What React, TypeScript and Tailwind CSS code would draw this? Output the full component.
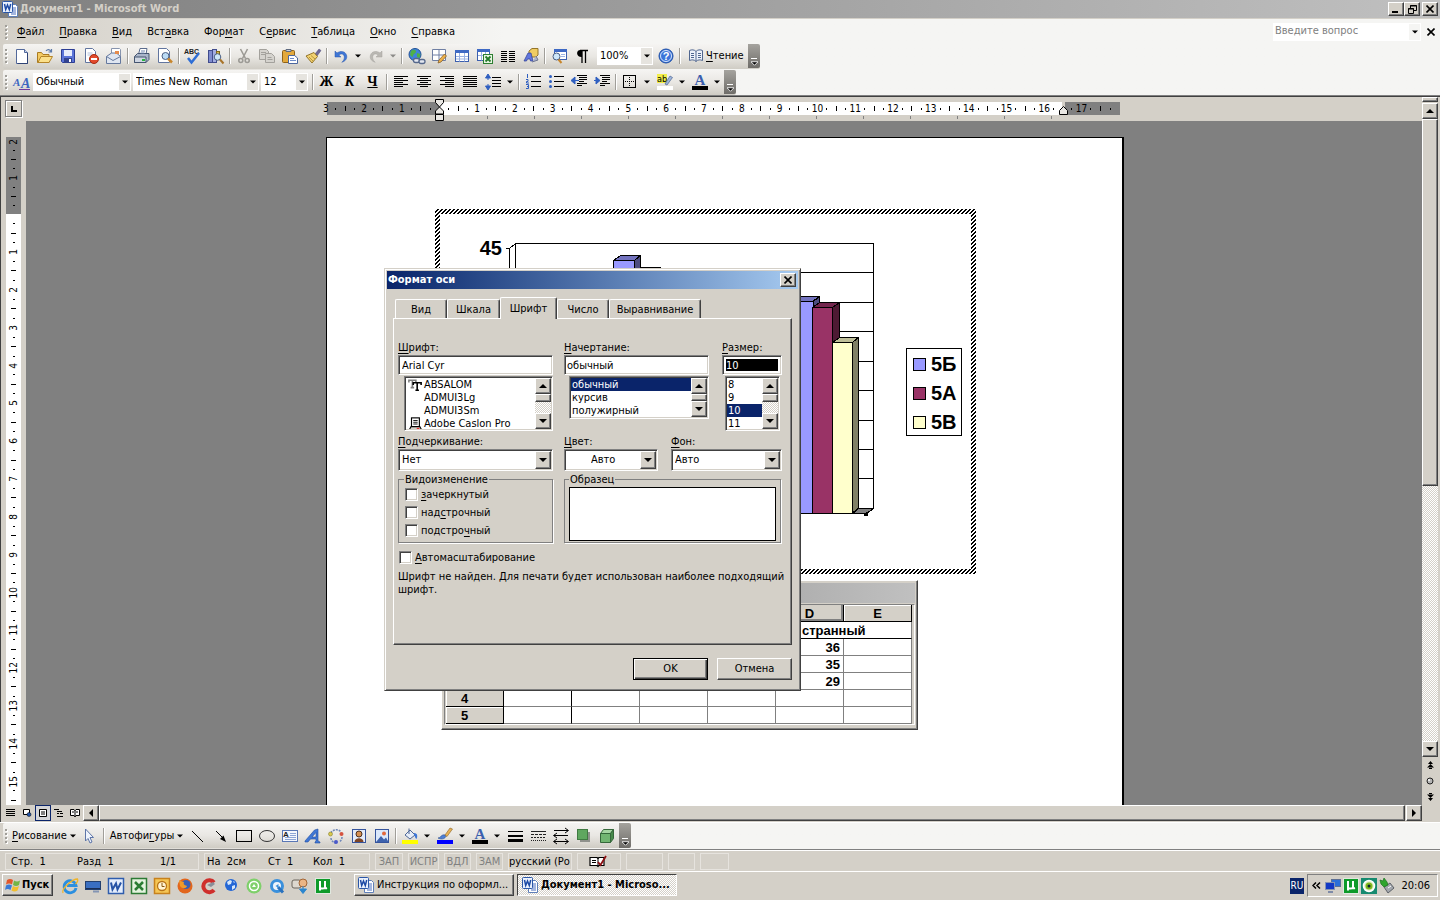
import type { ReactNode } from 'react'

const raised =
  'bg-[#d4d0c8] border border-t-white border-l-white border-b-[#404040] border-r-[#404040] shadow-[inset_-1px_-1px_0_#808080]'
const sunken =
  'bg-white border border-t-[#808080] border-l-[#808080] border-b-white border-r-white shadow-[inset_1px_1px_0_#404040,inset_-1px_-1px_0_#d4d0c8]'
const dither = 'bg-[repeating-conic-gradient(#ffffff_0_25%,#d4d0c8_0_50%)] bg-[length:2px_2px]'
const barBg = 'bg-linear-to-b from-[#f5f4f2] via-[#e9e7e3] to-[#cfccc4]'

/* ---------- icons ---------- */

const icons: Record<string, ReactNode> = {
  word: (
    <>
      <path d="M6.500 3.500h7l2 2v10h-9z" fill="#fff" stroke="#5f7fb8" />
      <path d="M9 7h5M9 9h5M9 11h5M9 13h5" stroke="#4b6fc0" />
      <rect x=".5" y=".5" width="10" height="11" rx="1" fill="#eaf1fd" stroke="#2b57a8" />
      <path d="M2.500 3l1.200 5.500L5.500 4l1.800 4.500L8.700 3" fill="none" stroke="#1d4aa5" strokeWidth="1.500" />
    </>
  ),
  newDoc: (
    <>
      <path d="M2.500 1.500h8l3 3v11h-11z" fill="#fff" stroke="#53699b" />
      <path d="M10.500 1.500v3h3" fill="#cbd9f2" stroke="#53699b" />
      <path d="M13.500 5v10.500h-10" stroke="#2f4375" fill="none" />
    </>
  ),
  open: (
    <>
      <path d="M.5 14.500v-10h4l1.500 2h6v8z" fill="#f4cb63" stroke="#a97b22" />
      <path d="M1 14.500l3-6h11.500l-3.500 6z" fill="#fbe08a" stroke="#b58528" />
      <path d="M9 3c1.500-2 4-2 5 .5M14.500 1v3h-3" fill="none" stroke="#5b79a8" strokeWidth="1.200" />
    </>
  ),
  save: (
    <>
      <path d="M1.500 1.500h13v13h-12l-1-1z" fill="#5b74d8" stroke="#2c3d94" />
      <rect x="4" y="2" width="8" height="6" fill="#e6ebfb" />
      <rect x="4" y="10" width="8" height="5" fill="#33438f" />
      <rect x="9" y="11" width="2" height="3" fill="#fff" />
    </>
  ),
  permission: (
    <>
      <path d="M2.500.5h7l3 3v11h-10z" fill="#fff" stroke="#61759f" />
      <path d="M4.500 5h5M4.500 7h5" stroke="#b3bfd8" />
      <circle cx="11" cy="11" r="4.500" fill="#e2492b" stroke="#a52a12" />
      <rect x="8" y="10" width="6" height="2" fill="#fff" />
    </>
  ),
  mail: (
    <>
      <path d="M5.500.5h8l1 1v9h-9z" fill="#fff" stroke="#8794ad" />
      <path d="M.5 8.500l5-3.500h5l4 3.500v7H.5z" fill="#dfe6f1" stroke="#64789e" />
      <path d="M.5 8.500l6.500 4 7.500-4" fill="none" stroke="#64789e" />
      <rect x="9" y="3" width="4" height="3" fill="#e58b4d" />
    </>
  ),
  print: (
    <>
      <path d="M4.500 6.500l1.500-6h7l-1 6z" fill="#fff" stroke="#5b6c8d" />
      <path d="M.5 8.500l3-3h11.500v6l-3 3H.5z" fill="#aab6ca" stroke="#44546f" />
      <path d="M.5 9h11.500v5.500H.5z" fill="#cfd6e2" stroke="#44546f" />
      <rect x="8" y="11" width="3" height="2" fill="#29b53d" />
      <path d="M7 3h4M6.500 5h4" stroke="#7187b0" />
    </>
  ),
  preview: (
    <>
      <path d="M1.500.5h8l3 3v11h-11z" fill="#fff" stroke="#61759f" />
      <circle cx="8.500" cy="8" r="3.500" fill="#bcdcf5" stroke="#4b5f83" />
      <path d="M11 10.500l4 4" stroke="#c8862c" strokeWidth="2.500" />
    </>
  ),
  spelling: (
    <>
      <text x="-1" y="6" fontSize="7" fontWeight="bold" fontFamily="Liberation Sans, sans-serif" fill="#222">ABC</text>
      <path d="M3 10l3.500 4.500L14 5" fill="none" stroke="#2f6fd6" strokeWidth="2.500" />
    </>
  ),
  research: (
    <>
      <rect x=".5" y="2.500" width="4" height="12" fill="#7f8ccf" stroke="#414c8d" />
      <rect x="4.500" y="1.500" width="4" height="13" fill="#a4aee2" stroke="#414c8d" />
      <rect x="8.500" y="3.500" width="3" height="4" fill="#d6b94f" stroke="#80681b" />
      <circle cx="9.500" cy="9" r="3.300" fill="#cfe8fa" stroke="#4b5f83" />
      <path d="M12 11.500l3.500 4" stroke="#a8742a" strokeWidth="2" />
    </>
  ),
  cut: (
    <g fill="none" stroke="#9c9a95" strokeWidth="1.600">
      <path d="M4.500 1l5 9.500M11.500 1l-5 9.500" />
      <circle cx="4.800" cy="12.500" r="2" />
      <circle cx="11.200" cy="12.500" r="2" />
    </g>
  ),
  copy: (
    <g fill="#d5d3ce" stroke="#a3a19c">
      <path d="M.5 1.500h7l2 2v8h-9z" />
      <path d="M6.500 5.500h6l3 3v6h-9z" />
      <path d="M2 4.500h5M2 6.500h4M8.500 9.500h4M8.500 11.500h5" />
    </g>
  ),
  paste: (
    <>
      <rect x=".5" y="2.500" width="12" height="12" rx="1" fill="#e3a93c" stroke="#8f6319" />
      <path d="M4 3.500v-2h5v2z" fill="#c9d0db" stroke="#5e6a80" />
      <path d="M6.500 7.500h6l3 2.500v5.500h-9z" fill="#fff" stroke="#4b669e" />
      <path d="M8 10.500h4M8 12.500h6" stroke="#6d8bc8" />
    </>
  ),
  painter: (
    <>
      <path d="M10 6l4-5 2 1.500L12 8z" fill="#6f6a9a" stroke="#4a4673" strokeWidth=".5" />
      <path d="M1 8l8-3.500 3.500 4L7 15z" fill="#f2d273" stroke="#94752a" />
      <path d="M4 9l4 4M6 7.500l4 3.500" stroke="#b99839" />
    </>
  ),
  undo: <path d="M2 3v6h6L5.800 7c3-2.500 6-.5 5.500 3-.2 1.700-1 3-2.500 4.300C13 13 14.500 10 13.500 7 12 3 7.500 2.500 4 5z" fill="#3f77d6" stroke="#2a57ab" strokeWidth=".5" />,
  redo: <path d="M14 3v6H8l2.200-2c-3-2.500-6-.5-5.500 3 .2 1.700 1 3 2.500 4.300C3 13 1.500 10 2.500 7 4 3 8.500 2.500 12 5z" fill="#bab8b3" stroke="#a5a39e" strokeWidth=".5" />,
  link: (
    <>
      <circle cx="7" cy="6.500" r="6" fill="#3f83dc" stroke="#1f4f96" />
      <path d="M3 3c2-2 5-1.500 5 .5S5 6 5 8s-2 0-3-1zM9 5l3.500 1-1 4-2.500-1z" fill="#4fb04a" />
      <g fill="#e4e8f0" stroke="#56688c" strokeWidth="1.300">
        <rect x="5.500" y="10.500" width="6" height="4" rx="2" />
        <rect x="11" y="11.500" width="6" height="4" rx="2" />
      </g>
    </>
  ),
  borders: (
    <>
      <path d="M1.500 1.500h13v11h-13zM8 1.500v11M1.500 7h13" fill="#fff" stroke="#6f7fa3" />
      <path d="M7 15l1-3 5.500-6 2 2L10 14z" fill="#eeb14a" stroke="#7c5620" strokeWidth=".7" />
    </>
  ),
  table: (
    <>
      <rect x="1.500" y="2.500" width="13" height="11" fill="#fff" stroke="#3b5fae" />
      <rect x="1" y="2" width="14" height="3" fill="#3e69c4" />
      <path d="M2 8.500h12M2 11h12M5.500 5v8.500M10.500 5v8.500" stroke="#9bb3e4" />
    </>
  ),
  excelTable: (
    <>
      <rect x=".5" y="1.500" width="12" height="11" fill="#fff" stroke="#3b5fae" />
      <rect x="0" y="1" width="13" height="3" fill="#3e69c4" />
      <path d="M1 7.500h11M4.500 4v8.500M8.500 4v8.500" stroke="#9bb3e4" />
      <rect x="6.500" y="6.500" width="9" height="9" fill="#e9f6e4" stroke="#2d7f31" />
      <path d="M8.500 8.500l5 5M13.500 8.500l-5 5" stroke="#237a2a" strokeWidth="1.800" />
    </>
  ),
  columns: <path d="M1 3.500h6M9 3.500h6M1 5.500h6M9 5.500h6M1 7.500h6M9 7.500h6M1 9.500h6M9 9.500h6M1 11.500h6M9 11.500h6M1 13.500h6M9 13.500h6" stroke="#000" />,
  drawing: (
    <>
      <path d="M6 3l3-2.500h6V7l-2 2H6z" fill="#f0cc62" stroke="#94752a" />
      <path d="M1 13L5 5h3l2 8H7.500l-.5-2H4.500l-1 2z" fill="#6276dc" stroke="#2c3d94" strokeWidth=".7" />
      <path d="M9 14l6-2-2-4" fill="#aeb4c9" stroke="#6f7691" />
    </>
  ),
  docMap: (
    <>
      <rect x="3.500" y="1.500" width="12" height="10" fill="#fff" stroke="#3b5fae" />
      <rect x="3" y="1" width="13" height="3" fill="#3e69c4" />
      <path d="M10 6.500h4M10 8.500h4" stroke="#9bb3e4" />
      <circle cx="5.500" cy="8.500" r="3.500" fill="#cfe8fa" stroke="#4b5f83" />
      <path d="M7.500 11.500l3 3.500" stroke="#c8862c" strokeWidth="2" />
    </>
  ),
  pilcrow: (
    <>
      <path d="M8 2v7C2 9.500 1.500 2 6.500 2z" />
      <path d="M6 2.500h8M8 3v12M11.500 3v12" fill="none" stroke="#000" strokeWidth="1.300" />
    </>
  ),
  help: (
    <>
      <circle cx="8" cy="8" r="7" fill="#3b74d9" stroke="#1f4fa6" />
      <circle cx="8" cy="8" r="5.500" fill="none" stroke="#d7e5fb" />
      <text x="8" y="12" textAnchor="middle" fontSize="11" fontWeight="bold" fontFamily="Liberation Sans, sans-serif" fill="#fff">?</text>
    </>
  ),
  book: (
    <>
      <path d="M1.500 2.500c2-1 5-1 6.500 1 1.500-2 4.500-2 6.500-1v10c-2-1-5-1-6.500 1-1.500-2-4.500-2-6.500-1z" fill="#eef2fa" stroke="#50668f" />
      <path d="M8 3.500v10M3 5.500h3M3 7.500h3M3 9.500h3M10 5.500h3M10 7.500h3M10 9.500h3" stroke="#50668f" />
    </>
  ),
  styles: (
    <>
      <text x="-1" y="12" fontSize="11" fontStyle="italic" fontWeight="bold" fontFamily="Liberation Serif, serif" fill="#3c66c0">A</text>
      <text x="7" y="14" fontSize="14" fontStyle="italic" fontWeight="bold" fontFamily="Liberation Serif, serif" fill="#3c66c0">A</text>
      <path d="M5 15.500h11" stroke="#713ba0" />
    </>
  ),
  alignLeft: <path d="M1 2.500h14M1 4.500h9M1 6.500h14M1 8.500h9M1 10.500h14M1 12.500h9" stroke="#000" />,
  alignCenter: <path d="M1 2.500h14M4 4.500h8M1 6.500h14M4 8.500h8M1 10.500h14M4 12.500h8" stroke="#000" />,
  alignRight: <path d="M1 2.500h14M6 4.500h9M1 6.500h14M6 8.500h9M1 10.500h14M6 12.500h9" stroke="#000" />,
  justify: <path d="M1 2.500h14M1 4.500h14M1 6.500h14M1 8.500h14M1 10.500h14M1 12.500h14" stroke="#000" />,
  spacing: (
    <>
      <path d="M7 3.500h9M7 6.500h9M7 9.500h9M7 12.500h9" stroke="#000" />
      <path d="M3 0L.5 4h5zM3 16L.5 12h5zM3 3v3M3 10v3" fill="#2f5fc0" stroke="#2f5fc0" />
    </>
  ),
  numbered: (
    <>
      <path d="M6 2.500h10M6 7.500h10M6 12.500h10" stroke="#000" />
      <path d="M2.500 0v4M1 5.500h2v2H1.500v1.500H4M1 10.500h2.500v4H1M2 12.500h1" stroke="#2f5fc0" fill="none" />
    </>
  ),
  bulleted: (
    <>
      <path d="M6 2.500h10M6 7.500h10M6 12.500h10" stroke="#000" />
      <g fill="#2f5fc0">
        <circle cx="2.500" cy="2.500" r="1.500" />
        <circle cx="2.500" cy="7.500" r="1.500" />
        <circle cx="2.500" cy="12.500" r="1.500" />
      </g>
    </>
  ),
  outdent: (
    <>
      <path d="M6 1.500h10M8 3.500h8M8 5.500h8M8 7.500h5M6 9.500h10M6 11.500h5" stroke="#000" strokeWidth="1.200" />
      <path d="M0 6.500L4 3v7zM4 6.500h4" fill="#2f5fc0" stroke="#2f5fc0" />
    </>
  ),
  indent: (
    <>
      <path d="M6 1.500h10M8 3.500h8M8 5.500h8M8 7.500h5M6 9.500h10M6 11.500h5" stroke="#000" strokeWidth="1.200" />
      <path d="M6 6.500L2 3v7zM0 6.500h3" fill="#2f5fc0" stroke="#2f5fc0" />
    </>
  ),
  border: (
    <>
      <rect x="1.500" y="1.500" width="12" height="12" fill="none" stroke="#000" />
      <path d="M7.500 3v10M3 7.500h10" stroke="#000" strokeDasharray="1 1" />
    </>
  ),
  highlight: (
    <>
      <rect x="0" y="0" width="10" height="9" fill="#f2ee4a" />
      <text x="0" y="8" fontSize="9" fontFamily="DejaVu Sans Condensed, sans-serif" fill="#000">ab</text>
      <path d="M8 10l5-8 2.500 1.500L10 11z" fill="#9db4dc" stroke="#4d6591" strokeWidth=".7" />
      <rect x="0" y="12" width="16" height="4" fill="#fff" />
    </>
  ),
  fontColor: (
    <>
      <text x="8" y="11" textAnchor="middle" fontSize="15" fontWeight="bold" fontFamily="Liberation Serif, serif" fill="#3b5fae">A</text>
      <rect x="0" y="12" width="16" height="4" fill="#000" />
    </>
  ),
  pointer: <path d="M4.500 1l8 8.500H9l2 4.500-2 1-2-4.500-2.500 2.500z" fill="#eef3fc" stroke="#5d75a8" />,
  line: <path d="M2 3l11 11" stroke="#000" />,
  arrow: (
    <>
      <path d="M3 3l7 7" stroke="#000" />
      <path d="M13 14l-6-3 3.500-3.500z" fill="#000" />
    </>
  ),
  rect: <rect x=".5" y="2.500" width="15" height="11" fill="none" stroke="#000" />,
  oval: <ellipse cx="8" cy="8" rx="7.500" ry="5.500" fill="none" stroke="#333" />,
  textBox: (
    <>
      <rect x=".5" y="2.500" width="15" height="11" fill="#f4f7fd" stroke="#5977b5" />
      <text x="1" y="9" fontSize="8" fontWeight="bold" fontFamily="Liberation Sans, sans-serif" fill="#222">A</text>
      <path d="M8 5.500h6M8 7.500h6M3 9.500h11M3 11.500h11" stroke="#8ca5d6" />
    </>
  ),
  wordArt: <path d="M0 13L9.500 2 13 1v12l2 1v1h-5v-1l1-1v-2H5.500L3 14H0zM7 9h4V4.500z" fill="#3f77d6" fillRule="evenodd" stroke="#234f9e" strokeWidth=".6" />,
  diagram: (
    <>
      <path d="M3 5c1-3 7-5 10-1M3 10c0 3 3 5 5 5M14 9c0 2-1 4-3 5" fill="none" stroke="#6f87b8" strokeDasharray="2 1" strokeWidth="1.500" />
      <circle cx="2.500" cy="6" r="2" fill="#d9c94e" stroke="#77701f" strokeWidth=".5" />
      <circle cx="13.500" cy="6" r="2" fill="#d5533f" />
      <circle cx="8" cy="14" r="2" fill="#4a59c9" />
    </>
  ),
  clip: (
    <>
      <rect x="1.500" y="1.500" width="13" height="13" fill="#e3ebfa" stroke="#35549c" />
      <circle cx="8" cy="6" r="3" fill="#d58f52" stroke="#4a3020" />
      <path d="M3.500 14c0-5 9-5 9 0z" fill="#7d4526" />
    </>
  ),
  picture: (
    <>
      <rect x="1.500" y="1.500" width="13" height="13" fill="#dbe8fb" stroke="#35549c" />
      <circle cx="10" cy="5.500" r="2" fill="#e2683d" />
      <path d="M2 14l5-6 3 3.500 2-2 2.500 4.500z" fill="#3d62ad" />
    </>
  ),
  fill: (
    <>
      <path d="M3 7l5-5 5 5-5 4z" fill="#e6edf8" stroke="#4d6797" />
      <path d="M7 6V.5" stroke="#4d6797" />
      <path d="M12 5c4 0 3.500 4 2.500 6-2-1-1-3-2.500-4z" fill="#3f77d6" />
      <rect x="0" y="12" width="16" height="4" fill="#ff0" />
    </>
  ),
  lineColor: (
    <>
      <path d="M1 10c3 0 3-4 7-3l1 1.500c-2 3-5 3-8 1.500z" fill="#4d7fd4" stroke="#2c4f92" strokeWidth=".6" />
      <path d="M8 7l5-7 2.500 1L10 8.500z" fill="#e9b255" stroke="#8a6322" strokeWidth=".6" />
      <rect x="0" y="12" width="16" height="4" fill="#00f" />
    </>
  ),
  lines: (
    <g fill="#000">
      <rect x="1" y="3" width="15" height="1" />
      <rect x="1" y="7" width="15" height="2" />
      <rect x="1" y="11" width="15" height="3" />
    </g>
  ),
  dashes: (
    <g stroke="#222">
      <path d="M1 3.500h15" />
      <path d="M1 6.500h15" strokeDasharray="3 1" />
      <path d="M1 9.500h15" strokeDasharray="2 1" />
      <path d="M1 12.500h15" strokeDasharray="1 1" />
    </g>
  ),
  arrows: (
    <path d="M1 2.500h14M12 0l3.500 2.500L12 5M1 7.500h14M4 5L.5 7.500 4 10M1 13.500h14M12 11l3.500 2.500L12 16M4 11L.5 13.500 4 16" fill="none" stroke="#000" />
  ),
  shadow: (
    <>
      <rect x="4" y="4" width="10" height="10" fill="#8f918c" />
      <rect x="1.500" y="1.500" width="10" height="10" fill="#5fa75f" stroke="#3f7a41" />
    </>
  ),
  cube: (
    <>
      <path d="M1.500 5.500h10v9h-10z" fill="#71b571" stroke="#35683a" />
      <path d="M1.500 5.500l3-4h10l-3 4z" fill="#a5d6a2" stroke="#35683a" />
      <path d="M11.500 5.500l3-4v9l-3 4z" fill="#478a4a" stroke="#35683a" />
    </>
  ),
  ie: (
    <>
      <path d="M14 10A6 6 0 1 1 14 7.500H5" fill="none" stroke="#2b8fe0" strokeWidth="2.800" />
      <path d="M1 15C-1 11 10 1 15.500 1c1 2-1 4-2 5" fill="none" stroke="#f0b429" strokeWidth="1.300" />
    </>
  ),
  desktop: (
    <>
      <rect x=".5" y="3.500" width="15" height="8" fill="#3a6fc2" stroke="#23406f" />
      <path d="M1 10.500h14" stroke="#1b2f55" />
      <path d="M8 13.500h6" stroke="#8394b3" strokeWidth="2" />
    </>
  ),
  wordBig: (
    <>
      <rect x=".5" y=".5" width="15" height="15" fill="#e4edfc" stroke="#2f5dad" strokeWidth="1.500" />
      <path d="M3 4.500l1.500 7L8 5.500l1.500 6 3.500-7" fill="none" stroke="#2552a5" strokeWidth="2" />
    </>
  ),
  excel: (
    <>
      <rect x=".5" y=".5" width="15" height="15" fill="#e3f3de" stroke="#2c7a34" strokeWidth="1.500" />
      <path d="M4 4l8 8M12 4l-8 8" stroke="#2a7d33" strokeWidth="2.500" />
    </>
  ),
  outlook: (
    <>
      <rect x=".5" y=".5" width="15" height="15" fill="#f6c655" stroke="#c7811c" strokeWidth="1.500" />
      <circle cx="8" cy="8" r="4.500" fill="#fff4d4" stroke="#b87418" strokeWidth="1.300" />
      <path d="M8 5v3.500h2.500" fill="none" stroke="#8c5710" />
    </>
  ),
  firefox: (
    <>
      <circle cx="8" cy="8" r="7.500" fill="#e2661c" />
      <circle cx="9" cy="6.500" r="4.500" fill="#3a5fb4" />
      <path d="M2 2c2 1 3 2 5 2-1 2 0 3 3 4-1 3-5 3-7 0z" fill="#f09a2a" />
    </>
  ),
  ccleaner: (
    <>
      <path d="M14 4.500A6 6 0 1 0 14 12" fill="none" stroke="#cf2f2c" strokeWidth="4" />
      <path d="M7 7l6-3 2 2L11 9z" fill="#8a8f99" />
    </>
  ),
  globe: (
    <>
      <circle cx="8" cy="7" r="6" fill="#2467d6" />
      <path d="M4 4l3-2 2 1-1 3-3 1zM9 8l3-1 0 3-3 2zM10 3l2 1-1 1z" fill="#d8e9fb" />
    </>
  ),
  greenDisc: (
    <>
      <circle cx="8" cy="8" r="7.500" fill="#7fd06b" />
      <circle cx="8" cy="8" r="4.500" fill="none" stroke="#fff" strokeWidth="1.500" />
      <path d="M6 9l2-3 2 3z" fill="#fff" />
    </>
  ),
  quicktime: (
    <>
      <circle cx="8" cy="8" r="5.500" fill="#eef4fb" stroke="#3a90dc" strokeWidth="3" />
      <path d="M9 9l5 5.500" stroke="#2a72be" strokeWidth="3" />
      <path d="M6.500 8l3-2v4z" fill="#3a90dc" />
    </>
  ),
  chat: (
    <>
      <rect x="0" y="2" width="9" height="8" rx="2" fill="#ddd8cf" stroke="#6a655c" />
      <circle cx="11" cy="5" r="4" fill="#eab585" stroke="#a36636" />
      <path d="M11 8v3M7.500 11h7L11 15.500z" fill="#2a86cf" stroke="#2a86cf" />
    </>
  ),
  utorrent: (
    <>
      <rect x=".5" y=".5" width="15" height="15" fill="#0e9a29" stroke="#dfe8df" />
      <path d="M5 3v9.500M5 9c0 2 5 2 5 0V3M10 9c0 1 .5 1.500 2 1" fill="none" stroke="#fff" strokeWidth="2" />
    </>
  ),
  network: (
    <>
      <rect x="6.500" y="1.500" width="9" height="7" fill="#2b6fd8" stroke="#5d6f93" />
      <rect x=".5" y="4.500" width="9" height="7" fill="#1238c4" stroke="#8493b5" />
      <path d="M3 14h5" stroke="#7e8ba8" strokeWidth="2" />
    </>
  ),
  eye: (
    <>
      <rect x="0" y="0" width="16" height="16" fill="#168a6f" />
      <circle cx="8" cy="8" r="5.500" fill="#dff0c5" stroke="#fff" strokeWidth="1.500" />
      <circle cx="8" cy="8" r="3.500" fill="#7eb81d" />
      <circle cx="8" cy="8" r="1.500" fill="#123" />
    </>
  ),
  usb: (
    <>
      <path d="M5 9l6-4 4 5-6 5z" fill="#a3a7ad" stroke="#5d6168" />
      <path d="M1 2l3 1 1-3 3 4 1 3-4 2-3-3z" fill="#2fa52d" stroke="#1b7320" strokeWidth=".7" />
      <path d="M9 10l3-2" stroke="#fff" />
    </>
  ),
  proof: (
    <>
      <path d="M0 3.500h7l1 1 1-1h5v8H9l-1 1-1-1H0z" fill="#fff" stroke="#000" strokeWidth="1.200" />
      <path d="M8 4v8M2 6.500h4M2 8.500h4" stroke="#000" />
      <path d="M8 8l2.500 3L16 2" fill="none" stroke="#8e0f12" strokeWidth="1.800" />
    </>
  ),
  flag: (
    <>
      <path d="M2 3c2-1.500 4-1.500 6 0L7 7.500c-2-1.500-4-1.500-6 0z" fill="#e2572b" />
      <path d="M9 3.500c2 1.300 4 1.300 6 0L14 8c-2 1.300-4 1.300-6 0z" fill="#73b545" />
      <path d="M1 8.500c2-1.500 4-1.500 6 0L5.500 13c-2-1.500-4-1.500-5.500 0z" fill="#3a7ad6" />
      <path d="M8 9c2 1.300 4 1.300 6 0l-1.500 4.500c-2 1.300-4 1.300-6 0z" fill="#f2be2c" />
    </>
  ),
  trueType: (
    <>
      <path d="M1 5V2.500h8V5M5 3v8M3 11h4" fill="none" stroke="#808080" strokeWidth="1.800" />
      <path d="M6 8V5.500h9V8M10.500 6v8M8.500 14h4" fill="none" stroke="#000" strokeWidth="1.800" />
    </>
  ),
  printerFont: (
    <>
      <rect x="4" y="1" width="9" height="10" fill="#fff" stroke="#000" strokeWidth="1.300" />
      <path d="M6 4h5M6 6h5M6 8h5" stroke="#000" />
      <path d="M3.500 11h10l2 3.500h-14z" fill="#d4d0c8" stroke="#000" strokeWidth="1.200" />
      <path d="M10 13h3" stroke="#e00" />
    </>
  ),
}

function Icon({ name, className = 'w-4 h-4' }: { name: string; className?: string }) {
  return (
    <svg viewBox="0 0 16 16" className={`${className} shrink-0 overflow-visible`} aria-hidden="true">
      {icons[name]}
    </svg>
  )
}

function Tri({ dir = 'down', small = false }: { dir?: 'up' | 'down' | 'left' | 'right'; small?: boolean }) {
  const d = {
    up: 'M4 2L0 6h8z',
    down: 'M0 2h8L4 6z',
    left: 'M2 4L6 0v8z',
    right: 'M6 4L2 0v8z',
  }[dir]
  return (
    <svg viewBox="0 0 8 8" className={small ? 'w-[6px] h-[6px] shrink-0' : 'w-2 h-2 shrink-0'} aria-hidden="true">
      <path d={d} />
    </svg>
  )
}

/* ---------- toolbar parts ---------- */

function Tool({ icon, label }: { icon: string; label: string }) {
  return (
    <button type="button" aria-label={label} className="w-[23px] h-[22px] flex items-center justify-center shrink-0">
      <Icon name={icon} />
    </button>
  )
}

function Drop({ label, dim = false }: { label: string; dim?: boolean }) {
  return (
    <button type="button" aria-label={label} className={`w-3 h-[22px] flex items-center justify-center shrink-0 ${dim ? 'opacity-40' : ''}`}>
      <Tri small />
    </button>
  )
}

function Sep() {
  return <div className="w-px h-4 mx-[2px] bg-[#a09e99] shadow-[1px_0_0_#ffffff] shrink-0" />
}

function Grip() {
  return (
    <div className="w-[3px] mx-[2px] flex flex-col gap-[2px] shrink-0">
      {[0, 1, 2, 3].map((i) => (
        <span key={i} className="w-[2px] h-[2px] bg-[#a09e99] shadow-[1px_1px_0_#ffffff]" />
      ))}
    </div>
  )
}

function Cap() {
  return (
    <button type="button" aria-label="Параметры панели" className="w-3 self-stretch ml-auto rounded-r-xs bg-linear-to-b from-[#a5a39e] to-[#6f6d69] flex flex-col items-center justify-end gap-px pb-px shrink-0">
      <span className="w-[6px] h-px bg-white" />
      <svg viewBox="0 0 8 8" className="w-[7px] h-[7px]" aria-hidden="true">
        <path d="M0 2h8L4 6z" stroke="#fff" strokeWidth="1" />
      </svg>
    </button>
  )
}

function ToolCombo({ value, label, className }: { value: string; label: string; className: string }) {
  return (
    <div className={`relative h-[18px] bg-white shrink-0 ${className}`}>
      <select aria-label={label} className="appearance-none w-full h-full pl-[2px] bg-white border border-white">
        <option>{value}</option>
      </select>
      <span className="absolute right-px top-px bottom-px w-[11px] bg-[#e6e4df] flex items-center justify-center pointer-events-none">
        <Tri small />
      </span>
    </div>
  )
}

function Key({ text, at = 0 }: { text: string; at?: number }) {
  return (
    <>
      {text.slice(0, at)}
      <u className="underline-offset-2">{text[at]}</u>
      {text.slice(at + 1)}
    </>
  )
}

/* ---------- window chrome ---------- */

function TitleBar() {
  return (
    <header className="h-[19px] border-b border-[#d4d0c8] bg-linear-to-r from-[#808080] to-[#c0c0c0] flex items-center px-[2px] gap-[2px]">
      <Icon name="word" />
      <h1 className="flex-1 text-[11px] font-bold text-[#d4d0c8]">Документ1 - Microsoft Word</h1>
      <div className="flex">
        <button type="button" aria-label="Свернуть" className={`w-4 h-[14px] flex items-end justify-start pl-[3px] pb-[2px] ${raised}`}>
          <span className="w-[6px] h-[2px] bg-black" />
        </button>
        <button type="button" aria-label="Восстановить" className={`w-4 h-[14px] flex items-center justify-center ${raised}`}>
          <svg viewBox="0 0 9 9" className="w-[9px] h-[9px]">
            <path d="M2.500 3V.5h6v5H6M2 1h7M.5 3.500h5v5h-5zM0 4h6" fill="none" stroke="#000" />
          </svg>
        </button>
        <button type="button" aria-label="Закрыть" className={`w-4 h-[14px] ml-[2px] flex items-center justify-center ${raised}`}>
          <Cross />
        </button>
      </div>
    </header>
  )
}

function Cross() {
  return (
    <svg viewBox="0 0 8 8" className="w-2 h-2 shrink-0" aria-hidden="true">
      <path d="M.5.5l7 7M7.500.5l-7 7" stroke="#000" strokeWidth="1.600" />
    </svg>
  )
}

const menu = [
  { text: 'Файл', at: 0 },
  { text: 'Правка', at: 0 },
  { text: 'Вид', at: 0 },
  { text: 'Вставка', at: 3 },
  { text: 'Формат', at: 3 },
  { text: 'Сервис', at: 1 },
  { text: 'Таблица', at: 0 },
  { text: 'Окно', at: 0 },
  { text: 'Справка', at: 0 },
]

function MenuBar() {
  return (
    <nav className="h-[25px] flex items-center pl-[3px] pr-[5px]">
      <Grip />
      <div className="flex gap-[15px] ml-[7px]">
        {menu.map((m) => (
          <button key={m.text} type="button">
            <Key text={m.text} at={m.at} />
          </button>
        ))}
      </div>
      <div className="relative ml-auto w-[148px] h-[18px] bg-white">
        <input aria-label="Вопрос" placeholder="Введите вопрос" className="w-full h-full pl-[2px] pb-[2px] placeholder:text-[#808080]" />
        <span className="absolute right-px top-px bottom-px w-[11px] bg-[#f5f5f3] flex items-center justify-center">
          <Tri small />
        </span>
      </div>
      <button type="button" aria-label="Закрыть документ" className="ml-[6px]">
        <Cross />
      </button>
    </nav>
  )
}

function StandardBar() {
  return (
    <div className={`w-[757px] h-[25px] mb-px pb-px ml-[3px] rounded-xs flex items-center ${barBg}`}>
      <Grip />
      <Tool icon="newDoc" label="Создать" />
      <Tool icon="open" label="Открыть" />
      <Tool icon="save" label="Сохранить" />
      <Tool icon="permission" label="Разрешения" />
      <Tool icon="mail" label="Сообщение" />
      <Sep />
      <Tool icon="print" label="Печать" />
      <Tool icon="preview" label="Просмотр" />
      <Sep />
      <Tool icon="spelling" label="Правописание" />
      <Tool icon="research" label="Справочные материалы" />
      <Sep />
      <Tool icon="cut" label="Вырезать" />
      <Tool icon="copy" label="Копировать" />
      <Tool icon="paste" label="Вставить" />
      <Tool icon="painter" label="Формат по образцу" />
      <Sep />
      <Tool icon="undo" label="Отменить" />
      <Drop label="Список отмены" />
      <Tool icon="redo" label="Вернуть" />
      <Drop label="Список возврата" dim />
      <Sep />
      <Tool icon="link" label="Гиперссылка" />
      <Tool icon="borders" label="Таблицы и границы" />
      <Tool icon="table" label="Добавить таблицу" />
      <Tool icon="excelTable" label="Таблица Excel" />
      <Tool icon="columns" label="Колонки" />
      <Tool icon="drawing" label="Панель рисования" />
      <Sep />
      <Tool icon="docMap" label="Схема документа" />
      <Tool icon="pilcrow" label="Непечатаемые знаки" />
      <ToolCombo value="100%" label="Масштаб" className="w-[56px] ml-1 mr-px" />
      <Tool icon="help" label="Справка" />
      <Sep />
      <button type="button" className="flex items-center gap-[2px] pl-[6px]">
        <Icon name="book" />
        <span><Key text="Чтение" /></span>
      </button>
      <Cap />
    </div>
  )
}

function FormatBar() {
  const letter = 'w-[23px] text-[14px] leading-none font-bold font-["Liberation_Serif",serif]'
  return (
    <div className={`w-[733px] h-[25px] pb-px ml-[3px] rounded-xs flex items-center ${barBg}`}>
      <Grip />
      <Tool icon="styles" label="Стили и форматирование" />
      <ToolCombo value="Обычный" label="Стиль" className="w-[98px]" />
      <ToolCombo value="Times New Roman" label="Шрифт" className="w-[126px] ml-[2px]" />
      <ToolCombo value="12" label="Размер шрифта" className="w-[47px] ml-[2px] mr-[2px]" />
      <Sep />
      <button type="button" className={letter}>Ж</button>
      <button type="button" className={`${letter} italic`}>К</button>
      <button type="button" className={`${letter} underline`}>Ч</button>
      <Sep />
      <Tool icon="alignLeft" label="По левому краю" />
      <Tool icon="alignCenter" label="По центру" />
      <Tool icon="alignRight" label="По правому краю" />
      <Tool icon="justify" label="По ширине" />
      <Tool icon="spacing" label="Интервал" />
      <Drop label="Выбор интервала" />
      <Sep />
      <Tool icon="numbered" label="Нумерация" />
      <Tool icon="bulleted" label="Маркеры" />
      <Tool icon="outdent" label="Уменьшить отступ" />
      <Tool icon="indent" label="Увеличить отступ" />
      <Sep />
      <Tool icon="border" label="Граница" />
      <Drop label="Выбор границы" />
      <Tool icon="highlight" label="Выделение цветом" />
      <Drop label="Цвет выделения" />
      <Tool icon="fontColor" label="Цвет шрифта" />
      <Drop label="Выбор цвета шрифта" />
      <Cap />
    </div>
  )
}

function DrawingBar() {
  return (
    <div className="h-[27px] border-t border-white bg-linear-to-r from-[#d4d0c8] to-[#f5f5f3] to-35% flex">
      <div className={`w-[628px] h-[25px] ml-[3px] rounded-xs flex items-center ${barBg}`}>
        <Grip />
        <button type="button" className="flex items-center gap-[3px] ml-[2px]">
          <span><Key text="Рисование" /></span>
          <Tri small />
        </button>
        <div className="w-[2px]" />
        <Tool icon="pointer" label="Выбор объектов" />
        <Sep />
        <button type="button" className="flex items-center gap-[3px] ml-[4px] mr-[3px]">
          <span><Key text="Автофигуры" at={6} /></span>
          <Tri small />
        </button>
        <Tool icon="line" label="Линия" />
        <Tool icon="arrow" label="Стрелка" />
        <Tool icon="rect" label="Прямоугольник" />
        <Tool icon="oval" label="Овал" />
        <Tool icon="textBox" label="Надпись" />
        <Tool icon="wordArt" label="WordArt" />
        <Tool icon="diagram" label="Диаграмма" />
        <Tool icon="clip" label="Картинка" />
        <Tool icon="picture" label="Рисунок" />
        <Sep />
        <Tool icon="fill" label="Цвет заливки" />
        <Drop label="Выбор заливки" />
        <Tool icon="lineColor" label="Цвет линий" />
        <Drop label="Выбор цвета линий" />
        <Tool icon="fontColor" label="Цвет шрифта" />
        <Drop label="Выбор цвета шрифта" />
        <Tool icon="lines" label="Тип линии" />
        <Tool icon="dashes" label="Тип штриха" />
        <Tool icon="arrows" label="Вид стрелки" />
        <Tool icon="shadow" label="Тень" />
        <Tool icon="cube" label="Объем" />
        <Cap />
      </div>
    </div>
  )
}

/* ---------- rulers ---------- */

// marks go in quarters of a centimetre: dot, bar, dot, number
function Marks({ from, to, vertical = false }: { from: number; to: number; vertical?: boolean }) {
  const list = []
  for (let k = from; k <= to; k++) list.push(k)
  return (
    <>
      {list.map((k) => {
        const part = ((k % 4) + 4) % 4
        return (
          <span key={k} className="flex-1 min-w-0 min-h-0 flex items-center justify-center text-[10px] leading-none">
            {part === 0 && <span className={vertical ? '[writing-mode:vertical-rl] rotate-180' : ''}>{Math.abs(k / 4)}</span>}
            {part === 2 && <span className={vertical ? 'w-[5px] h-px bg-black' : 'w-px h-[5px] bg-black'} />}
            {part % 2 === 1 && <span className={vertical ? 'w-[2px] h-px bg-black' : 'w-px h-[2px] bg-black'} />}
          </span>
        )
      })}
    </>
  )
}

function HorizontalRuler() {
  return (
    <div className="flex-1 flex justify-center items-start pt-[5px]">
      <div className="relative flex w-[794px] h-[13px]">
        <span className="absolute -left-1 top-[2px] text-[10px] leading-none">3</span>
        <div className="w-[112px] pl-1 pr-1 bg-[#808080] flex">
          <Marks from={-11} to={-1} />
        </div>
        <div className="w-[623px] pl-[5px] pr-1 bg-white flex">
          <Marks from={1} to={65} />
        </div>
        <div className="w-[55px] ml-[3px] pl-[2px] pr-[5px] bg-[#808080] flex">
          <Marks from={67} to={71} />
        </div>
        <svg viewBox="0 0 9 22" className="absolute left-[108px] -top-[3px] w-[9px] h-[22px]" aria-hidden="true">
          <path d="M.5.5h8v3L4.500 8l4 4v3h-8v-3l4-4-4-4.500zM.5 15.500h8v6h-8z" fill="#e9e7e3" stroke="#000" />
        </svg>
        <svg viewBox="0 0 9 9" className="absolute left-[732px] top-[4px] w-[9px] h-[9px]" aria-hidden="true">
          <path d="M4.500.5l4 4v4h-8v-4z" fill="#e9e7e3" stroke="#000" />
        </svg>
        <div className="absolute left-[160px] right-[60px] top-[14px] h-[3px] bg-[repeating-linear-gradient(90deg,#808080_0_1px,transparent_1px_47px)]" />
      </div>
    </div>
  )
}

function VerticalRuler() {
  return (
    <div className="w-[25px] pl-[5px] pt-4 flex bg-[#d4d0c8] overflow-hidden">
      <div className="w-[15px] flex flex-col bg-white">
        <div className="h-[77px] pb-1 bg-[#808080] flex flex-col shrink-0">
          <Marks from={-8} to={-1} vertical />
        </div>
        <div className="h-[591px] pt-[5px] flex flex-col shrink-0">
          <Marks from={1} to={62} vertical />
        </div>
      </div>
    </div>
  )
}

/* ---------- document ---------- */

function Chart() {
  const lines = [272, 302, 331, 361, 390, 420, 449, 478]
  const legend = [
    { name: '5Б', color: '#9999ff' },
    { name: '5А', color: '#993366' },
    { name: '5В', color: '#ffffcc' },
  ]
  return (
    <svg viewBox="435 209 541 365" className="w-[541px] h-[365px] ml-[108px]" role="img" aria-label="Диаграмма">
      <defs>
        <pattern id="hatch" x="435" y="209" width="4" height="4" patternUnits="userSpaceOnUse">
          <rect width="4" height="4" fill="#fff" />
          <path d="M2 0h2v1H2zM1 1h2v1H1zM0 2h2v1H0zM0 3h1v1H0zM3 3h1v1H3z" shapeRendering="crispEdges" />
        </pattern>
      </defs>
      <path d="M435 209h541v365H435zM440 214v355h531V214z" fill="url(#hatch)" fillRule="evenodd" />
      <g stroke="#000" shapeRendering="crispEdges" fill="none">
        <path d="M515.500 508V243.500h358V508M509.500 513V248.500l6-5M506 248.500h3" />
        {lines.map((y) => (
          <path key={y} d={`M515 ${y}.5h358`} />
        ))}
        <path d="M641 267.500h20" />
        <path d="M509 513.500h344l20-5h-14" />
        <path d="M853.500 513.500l5-5h15l-7 5z" fill="#808080" />
        <path d="M613.500 513V260.500h21V513" fill="#9999ff" />
        <path d="M613.500 260.500l7-5h20l-6 5z" fill="#7373bf" />
        <path d="M634.500 260.500l6-5V400l-6 5z" fill="#4d4d80" />
        <path d="M792.500 513.500v-212h21v212z" fill="#9999ff" />
        <path d="M792.500 301.500l7-5h20l-7 5z" fill="#7373bf" />
        <path d="M813.500 301.500l6-5V306h-6z" fill="#4d4d80" />
        <path d="M812.500 513.500v-206h20v206z" fill="#993366" />
        <path d="M812.500 307.500l7-5h20l-7 5z" fill="#73264d" />
        <path d="M832.500 307.500l7-5V342h-7z" fill="#4d1a33" />
        <path d="M832.500 513.500v-171h20v171z" fill="#ffffcc" />
        <path d="M832.500 342.500l7-5h19l-6 5z" fill="#bfbf99" />
        <path d="M852.500 342.500l6-5V508l-6 5z" fill="#808066" />
        <path d="M864 514.500h4M867 512v4" strokeWidth="2" />
        <path d="M906.500 348.500h55v87h-55z" fill="#fff" />
      </g>
      <g fontFamily="Liberation Sans, sans-serif" fontWeight="bold" fontSize="20">
        <text x="502" y="255" textAnchor="end">45</text>
        {legend.map((item, i) => (
          <g key={item.name}>
            <rect x="913.5" y={358.5 + i * 29} width="12" height="12" fill={item.color} stroke="#000" />
            <text x="931" y={371 + i * 29}>{item.name}</text>
          </g>
        ))}
      </g>
    </svg>
  )
}

const sheet = [
  { head: '', d: 'странный' },
  { head: '', d: '36' },
  { head: '', d: '35' },
  { head: '', d: '29' },
  { head: '4', d: '' },
  { head: '5', d: '' },
]

function Datasheet() {
  const head = 'h-[17px] p-0 bg-[#d4d0c8] border-r border-b border-black text-center'
  return (
    <div className={`w-[477px] h-[150px] mt-[6px] ml-[114px] p-[2px] ${raised}`}>
      <div className="h-[20px] bg-linear-to-r from-[#808080] to-[#c0c0c0]" />
      <div className="border border-[#808080] border-b-white border-r-white mt-px">
        <table className="w-[466px] ml-px table-fixed border-separate border-spacing-0 bg-white font-bold text-[13px] leading-none font-['Liberation_Sans',sans-serif]">
          <colgroup>
            <col className="w-[58px]" />
          </colgroup>
          <thead>
            <tr>
              {['', '', '', '', '', 'D', 'E'].map((c, i) => (
                <th key={i} className={`${head} ${c === 'D' ? 'shadow-[inset_-2px_-2px_0_#808080]' : 'shadow-[inset_1px_1px_0_#ffffff]'}`}>{c}</th>
              ))}
            </tr>
          </thead>
          <tbody>
            {sheet.map((row, i) => (
              <tr key={i}>
                <th className={`${head} pr-5 shadow-[inset_1px_1px_0_#ffffff]`}>{row.head}</th>
                <td className={`border-b border-r border-r-black ${i === 0 ? 'border-b-black' : 'border-b-[#808080]'}`} />
                {[1, 2, 3].map((n) => (
                  <td key={n} className={`border-b border-r ${i === 0 ? 'border-black' : 'border-[#808080]'}`} />
                ))}
                <td className={`p-0 border-b text-right ${i === 0 ? 'border-b-black' : 'border-r border-[#808080] pr-[3px]'}`}>
                  {i === 0 ? <div className="w-0 ml-[26px] whitespace-nowrap">{row.d}</div> : row.d}
                </td>
                <td className={`border-b border-r ${i === 0 ? 'border-b-black border-r-[#808080]' : 'border-[#808080]'}`} />
              </tr>
            ))}
          </tbody>
        </table>
      </div>
    </div>
  )
}

/* ---------- dialog ---------- */

function ListScroll() {
  return (
    <div className={`w-4 flex flex-col ${dither}`}>
      <div className={`h-4 flex items-center justify-center shrink-0 ${raised}`}><Tri dir="up" /></div>
      <div className={`h-[8px] shrink ${raised}`} />
      <div className="flex-1" />
      <div className={`h-4 flex items-center justify-center shrink-0 ${raised}`}><Tri /></div>
    </div>
  )
}

function ListBox({ label, items, selected, className, iconsFor }: { label: string; items: string[]; selected?: string; className: string; iconsFor?: Record<string, string> }) {
  return (
    <div className={`flex p-px ${sunken} ${className}`}>
      <ul role="listbox" aria-label={label} className="flex-1 leading-[13px] overflow-hidden">
        {items.map((item) => (
          <li key={item} role="option" aria-selected={item === selected} className={`flex items-center gap-px h-[13px] pl-px ${item === selected ? 'bg-[#0a246a] text-white' : ''}`}>
            {iconsFor && (iconsFor[item] ? <Icon name={iconsFor[item]} className="w-4 h-[14px]" /> : <span className="w-4" />)}
            {item}
          </li>
        ))}
      </ul>
      <ListScroll />
    </div>
  )
}

function Combo({ id, label, value, className, center = false }: { id: string; label: string; value: string; className: string; center?: boolean }) {
  return (
    <div className={className}>
      <label htmlFor={id} className="block leading-[13px] mb-px"><Key text={label} /></label>
      <div className={`relative h-[22px] p-[2px] ${sunken}`}>
        <select id={id} className={`appearance-none w-full h-full bg-transparent ${center ? 'pl-[24px]' : 'pl-px'}`}>
          <option>{value}</option>
        </select>
        <span className={`absolute right-px top-px bottom-px w-4 flex items-center justify-center pointer-events-none ${raised}`}>
          <Tri />
        </span>
      </div>
    </div>
  )
}

function Check({ text, at = 0 }: { text: string; at?: number }) {
  return (
    <label className="flex items-center gap-[3px] h-[18px] pl-px">
      <input type="checkbox" className={`appearance-none w-[13px] h-[13px] mb-px shrink-0 ${sunken}`} />
      <span><Key text={text} at={at} /></span>
    </label>
  )
}

const tabs = [
  { name: 'Вид', width: 'w-[52px]' },
  { name: 'Шкала', width: 'w-[53px]' },
  { name: 'Шрифт', width: 'w-[57px]' },
  { name: 'Число', width: 'w-[52px]' },
  { name: 'Выравнивание', width: 'w-[92px]' },
]

function FormatDialog() {
  const fonts = ['ABSALOM', 'ADMUI3Lg', 'ADMUI3Sm', 'Adobe Caslon Pro']
  return (
    <div role="dialog" aria-label="Формат оси" className="absolute left-[57px] top-[130px] w-[417px] h-[423px] p-px bg-[#d4d0c8] border border-t-[#d4d0c8] border-l-[#d4d0c8] border-b-[#404040] border-r-[#404040] shadow-[inset_1px_1px_0_#ffffff,inset_-1px_-1px_0_#808080]">
      <div className="m-px h-[18px] pl-px pr-[2px] bg-linear-to-r from-[#0a246a] to-[#a6caf0] flex items-center justify-between">
        <h2 className="text-[11px] font-bold text-white">Формат оси</h2>
        <button type="button" aria-label="Закрыть" className={`w-4 h-[14px] flex items-center justify-center ${raised}`}>
          <Cross />
        </button>
      </div>
      <div role="tablist" className="flex items-end h-7 ml-[9px]">
        {tabs.map((t) => {
          const on = t.name === 'Шрифт'
          return (
            <button key={t.name} type="button" role="tab" aria-selected={on} className={`${t.width} shrink-0 rounded-t-xs bg-[#d4d0c8] border-t border-l border-r border-t-white border-l-white border-r-[#404040] shadow-[inset_-1px_0_0_#808080] ${on ? 'relative z-10 h-[22px] -mb-px' : 'h-[19px] pt-px'}`}>
              {t.name}
            </button>
          )
        })}
      </div>
      <div role="tabpanel" className="mx-[7px] h-[327px] pl-1 pt-[22px] border border-t-white border-l-white border-b-[#404040] border-r-[#404040] shadow-[inset_-1px_-1px_0_#808080]">
        <div className="flex items-start">
          <div className="w-[155px]">
            <label htmlFor="font" className="block leading-[13px] mb-px"><Key text="Шрифт:" /></label>
            <input id="font" defaultValue="Arial Cyr" className={`block w-full h-5 px-[3px] ${sunken}`} />
            <ListBox label="Шрифт" items={fonts} iconsFor={{ ABSALOM: 'trueType', 'Adobe Caslon Pro': 'printerFont' }} className="h-[55px] mt-px ml-[6px]" />
          </div>
          <div className="w-[145px] ml-[11px]">
            <label htmlFor="style" className="block leading-[13px] mb-px"><Key text="Начертание:" /></label>
            <input id="style" defaultValue="обычный" className={`block w-full h-5 px-[2px] ${sunken}`} />
            <ListBox label="Начертание" items={['обычный', 'курсив', 'полужирный']} selected="обычный" className="h-[43px] mt-px ml-[5px]" />
          </div>
          <div className="w-[60px] ml-[13px]">
            <label htmlFor="size" className="block leading-[13px] mb-px"><Key text="Размер:" /></label>
            <div className={`h-5 p-[3px] ${sunken}`}>
              <input id="size" defaultValue="10" className="block w-full h-full bg-black text-white" />
            </div>
            <ListBox label="Размер" items={['8', '9', '10', '11']} selected="10" className="h-[55px] mt-px ml-[3px] mr-[2px]" />
          </div>
        </div>
        <div className="flex mt-1">
          <Combo id="underline" label="Подчеркивание:" value="Нет" className="w-[155px]" />
          <Combo id="color" label="Цвет:" value="Авто" className="w-[94px] ml-[11px]" center />
          <Combo id="background" label="Фон:" value="Авто" className="w-[111px] ml-[13px]" />
        </div>
        <div className="flex mt-[2px] gap-[11px]">
          <fieldset className="w-[155px] h-[70px] pl-[5px] border border-[#808080] shadow-[1px_1px_0_#ffffff]">
            <legend className="leading-[13px] px-px">Видоизменение</legend>
            <Check text="зачеркнутый" />
            <Check text="надстрочный" at={3} />
            <Check text="подстрочный" at={7} />
          </fieldset>
          <fieldset className="w-[217px] h-[70px] px-1 border border-[#808080] shadow-[1px_1px_0_#ffffff]">
            <legend className="leading-[13px] px-px">Образец</legend>
            <div className="h-[54px] mt-px bg-white border border-black" />
          </fieldset>
        </div>
        <div className="mt-[6px]">
          <Check text="Автомасштабирование" />
        </div>
        <p className="mt-[3px] leading-[13px]">
          Шрифт не найден. Для печати будет использован наиболее подходящий шрифт.
        </p>
      </div>
      <div className="flex justify-end gap-[9px] mt-[13px] mr-[7px]">
        <button type="button" className="w-[75px] h-[22px] border border-black bg-[#d4d0c8] shadow-[inset_1px_1px_0_#ffffff,inset_-1px_-1px_0_#404040,inset_-2px_-2px_0_#808080]">OK</button>
        <button type="button" className={`w-[75px] h-[22px] ${raised}`}>Отмена</button>
      </div>
    </div>
  )
}

/* ---------- scroll bars, status, taskbar ---------- */

function VerticalScroll() {
  const nav = 'h-4 flex items-center justify-center'
  return (
    <div className="w-4 mr-[2px] flex flex-col">
      <div className={`h-[5px] mb-px ${raised}`} />
      <button type="button" aria-label="Вверх" className={`h-4 flex items-center justify-center ${raised}`}><Tri dir="up" /></button>
      <div className={`flex-1 flex flex-col ${dither}`}>
        <div className={`basis-[59%] ${raised}`} />
      </div>
      <button type="button" aria-label="Вниз" className={`h-4 flex items-center justify-center ${raised}`}><Tri /></button>
      <button type="button" aria-label="Предыдущая страница" className={nav}>
        <svg viewBox="0 0 7 8" className="w-[7px] h-2"><path d="M3.500 0L1 3h5zM3.500 3L0 6.500h7zM2 7h3v1H2z" /></svg>
      </button>
      <button type="button" aria-label="Выбор объекта" className={nav}>
        <svg viewBox="0 0 8 8" className="w-2 h-2"><circle cx="4" cy="4" r="3" fill="#b4b4b4" stroke="#222" /><circle cx="3" cy="3" r="1" fill="#fff" /></svg>
      </button>
      <button type="button" aria-label="Следующая страница" className={nav}>
        <svg viewBox="0 0 7 8" className="w-[7px] h-2"><path d="M3.500 8L1 5h5zM3.500 5L0 1.500h7zM2 0h3v1H2z" /></svg>
      </button>
    </div>
  )
}

function ViewBar() {
  const btn = 'w-4 h-4 flex items-center justify-center shrink-0'
  return (
    <div className="h-4 mb-px pl-[2px] pr-[18px] flex">
      <button type="button" aria-label="Обычный" className={btn}>
        <svg viewBox="0 0 10 10" className="w-[10px] h-[10px]"><path d="M0 1.500h9M0 3.500h9M0 5.500h9M0 7.500h9" stroke="#000" /></svg>
      </button>
      <button type="button" aria-label="Веб-документ" className={btn}>
        <svg viewBox="0 0 10 10" className="w-[10px] h-[10px]"><path d="M1.500 1.500h6v5h-6z" fill="#fff" stroke="#000" /><circle cx="7" cy="6.500" r="2" fill="#2456a8" stroke="#000" strokeWidth=".5" /></svg>
      </button>
      <button type="button" aria-label="Разметка страницы" className={`${btn} border border-[#0a246a] bg-[#d4d5d8]`}>
        <svg viewBox="0 0 10 10" className="w-[10px] h-[10px]"><path d="M1.500 1.500h7v7h-7zM3 4h4M3 6h4" fill="#fff" stroke="#000" /></svg>
      </button>
      <button type="button" aria-label="Структура" className={btn}>
        <svg viewBox="0 0 10 10" className="w-[10px] h-[10px]"><path d="M0 1.500h5M3 3.500h5M3 5.500h2M6 5.500h3M3 8.500h6" stroke="#000" /></svg>
      </button>
      <button type="button" aria-label="Режим чтения" className={btn}>
        <svg viewBox="0 0 10 10" className="w-[10px] h-[10px]"><path d="M.5 1.500h3.500l1 1 1-1h3.500v6H6l-1 1.500-1-1.500H.5zM5 2v6M2 4h2M6 4h2" fill="#fff" stroke="#000" /></svg>
      </button>
      <button type="button" aria-label="Влево" className={`${btn} ${raised}`}><Tri dir="left" /></button>
      <div className={`flex-1 mr-px ${raised}`} />
      <button type="button" aria-label="Вправо" className={`${btn} ${raised}`}><Tri dir="right" /></button>
    </div>
  )
}

function StatusBar() {
  const box = 'h-[17px] border border-[#e6e3de] flex items-center shrink-0 whitespace-pre'
  return (
    <footer className="h-[22px] border-t border-[#808080] shadow-[inset_0_1px_0_#ffffff] flex items-center gap-[5px] pl-[5px] pt-[2px]">
      <div className={`${box} w-[194px] pl-[5px]`}>
        <span className="w-[66px]">Стр.  1</span>
        <span className="w-[83px]">Разд  1</span>
        <span>1/1</span>
      </div>
      <div className={`${box} w-[166px] pl-[2px]`}>
        <span className="w-[61px]">На  2см</span>
        <span className="w-[45px]">Ст  1</span>
        <span>Кол  1</span>
      </div>
      <div className={`${box} w-[28px] justify-center text-[#808080]`}>ЗАП</div>
      <div className={`${box} w-[31px] justify-center text-[#808080]`}>ИСПР</div>
      <div className={`${box} w-[27px] justify-center text-[#808080]`}>ВДЛ</div>
      <div className={`${box} w-[27px] justify-center text-[#808080]`}>ЗАМ</div>
      <div className={`${box} w-[64px]`}>русский (Ро</div>
      <div className={`${box} w-[44px] pl-[11px]`}><Icon name="proof" className="w-[18px] h-4" /></div>
      <div className={`${box} w-[37px]`} />
      <div className={`${box} w-[27px]`} />
      <div className={`${box} w-[29px]`} />
    </footer>
  )
}

const quick = [
  { icon: 'ie', label: 'Internet Explorer' },
  { icon: 'desktop', label: 'Свернуть все окна' },
  { icon: 'wordBig', label: 'Word' },
  { icon: 'excel', label: 'Excel' },
  { icon: 'outlook', label: 'Outlook' },
  { icon: 'firefox', label: 'Firefox' },
  { icon: 'ccleaner', label: 'CCleaner' },
  { icon: 'globe', label: 'Браузер' },
  { icon: 'greenDisc', label: 'Мессенджер' },
  { icon: 'quicktime', label: 'QuickTime' },
  { icon: 'chat', label: 'Загрузки' },
  { icon: 'utorrent', label: 'Торрент' },
]

function Taskbar() {
  return (
    <div className="h-[29px] border-t border-white flex items-start pt-[2px] pl-[2px] pr-[2px]">
      <button type="button" className={`w-[51px] h-[22px] flex items-center gap-px pl-[2px] font-bold ${raised}`}>
        <Icon name="flag" />
        Пуск
      </button>
      <div className="flex ml-[5px] pt-px">
        {quick.map((q) => (
          <Tool key={q.icon} icon={q.icon} label={q.label} />
        ))}
      </div>
      <button type="button" className={`w-[160px] h-[22px] ml-5 flex items-center gap-[3px] pl-[3px] whitespace-nowrap overflow-hidden ${raised}`}>
        <Icon name="word" />
        Инструкция по оформл...
      </button>
      <button type="button" className={`w-[160px] h-[22px] ml-[3px] flex items-center gap-[3px] pl-[4px] font-bold whitespace-nowrap overflow-hidden border border-t-[#404040] border-l-[#404040] border-b-white border-r-white ${dither}`}>
        <Icon name="word" />
        Документ1 - Microso...
      </button>
      <div className="ml-auto flex items-center h-[23px]">
        <span className="w-[14px] h-4 mr-[3px] bg-[#0a246a] text-white text-center text-[10px] leading-4">RU</span>
        <div className="w-[131px] h-[23px] pl-[4px] border border-[#808080] border-b-white border-r-white flex items-center gap-[2px]">
          <svg viewBox="0 0 9 7" className="w-[9px] h-[7px] shrink-0" aria-hidden="true">
            <path d="M4 .5l-3 3 3 3M8 .5l-3 3 3 3" fill="none" stroke="#000" strokeWidth="1.500" />
          </svg>
          <Icon name="network" className="w-4 h-4 ml-[2px]" />
          <Icon name="utorrent" className="w-4 h-4" />
          <Icon name="eye" className="w-4 h-4" />
          <Icon name="usb" className="w-4 h-4" />
          <span className="ml-auto mr-[7px]">20:06</span>
        </div>
      </div>
    </div>
  )
}

export default function App() {
  return (
    <div className="h-screen flex flex-col overflow-hidden bg-[#d4d0c8] text-black text-[11px] leading-[14px] font-['DejaVu_Sans_Condensed','Noto_Sans',sans-serif]">
      <TitleBar />
      <div className="bg-linear-to-r from-[#d4d0c8] to-[#f5f5f3] to-35%">
        <MenuBar />
        <StandardBar />
        <FormatBar />
      </div>
      <main className="flex-1 min-h-0 flex flex-col border-t border-[#808080] shadow-[inset_1px_1px_0_#404040] pl-px pt-px">
        <div className="flex-1 min-h-0 flex">
          <div className="flex-1 min-w-0 flex flex-col">
            <div className="h-6 flex shrink-0">
              <div className="w-[25px] pl-1 pt-[3px]">
                <button type="button" aria-label="Табуляция" className="w-[17px] h-[17px] flex items-center justify-center border border-[#808080] shadow-[1px_1px_0_#ffffff,inset_1px_1px_0_#ffffff]">
                  <span className="w-[6px] h-[6px] border-l-2 border-b-2 border-black" />
                </button>
              </div>
              <HorizontalRuler />
            </div>
            <div className="flex-1 min-h-0 flex">
              <VerticalRuler />
              <div className="flex-1 min-w-0 bg-[#808080] pt-4 pl-[2px] overflow-hidden">
                <div className="relative w-[798px] h-[1123px] mx-auto pt-[71px] bg-white border border-black border-r-2">
                  <Chart />
                  <Datasheet />
                  <FormatDialog />
                </div>
              </div>
            </div>
          </div>
          <VerticalScroll />
        </div>
        <ViewBar />
      </main>
      <DrawingBar />
      <StatusBar />
      <Taskbar />
    </div>
  )
}
